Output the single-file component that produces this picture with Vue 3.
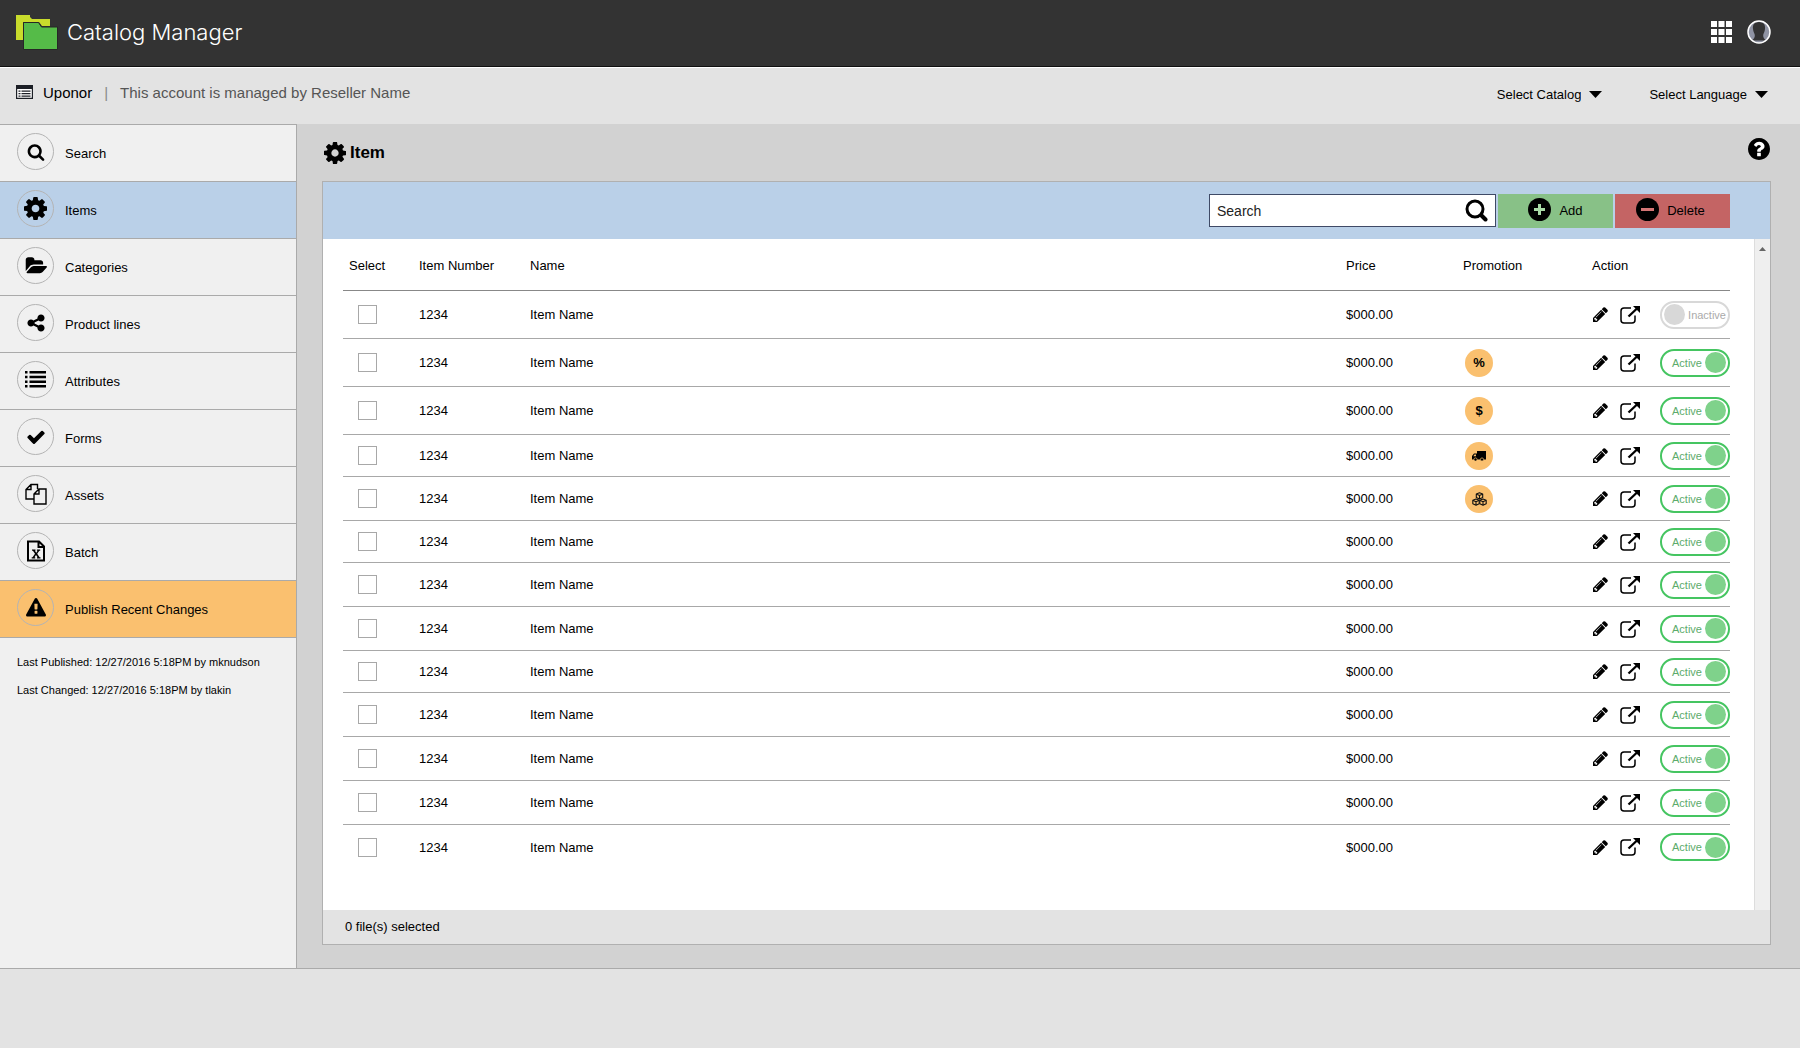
<script setup>
import { ref, computed } from 'vue'

const icons = {
  search: { box: '0 0 1792 1792', d: 'M1216 832q0-185-131.5-316.5t-316.5-131.5-316.5 131.5-131.5 316.5 131.5 316.5 316.5 131.5 316.5-131.5 131.5-316.5zm512 832q0 52-38 90t-90 38q-54 0-90-38l-343-342q-179 124-399 124-143 0-273.5-55.5t-225-150-150-225-55.5-273.5 55.5-273.5 150-225 225-150 273.5-55.5 273.5 55.5 225 150 150 225 55.5 273.5q0 220-124 399l343 343q37 37 37 90z' },
  gear: { box: '128 128 1536 1536', d: 'M1152 896q0-106-75-181t-181-75-181 75-75 181 75 181 181 75 181-75 75-181zm512-109v222q0 12-8 23t-20 13l-185 28q-19 54-39 91 35 50 107 138 10 12 10 25t-9 23q-27 37-99 108t-94 71q-12 0-26-9l-138-108q-44 23-91 38-16 136-29 186-7 28-36 28h-222q-14 0-24.5-8.5t-11.5-21.5l-28-184q-49-16-90-37l-141 107q-10 9-25 9-14 0-25-11-126-114-165-168-7-10-7-23 0-12 8-23 15-21 51-66.5t54-70.5q-27-50-41-99l-183-27q-13-2-21-12.5t-8-23.5v-222q0-12 8-23t19-13l186-28q14-46 39-92-40-57-107-138-10-12-10-24 0-10 9-23 26-36 98.5-107.5t94.5-71.5q13 0 26 10l138 107q44-23 91-38 16-136 29-186 7-28 36-28h222q14 0 24.5 8.5t11.5 21.5l28 184q49 16 90 37l142-107q9-9 24-9 13 0 25 10 129 119 165 170 7 8 7 22 0 12-8 23-15 21-51 66.5t-54 70.5q26 50 41 98l183 28q13 2 21 12.5t8 23.5z' },
  folder: { box: '0 0 1943 1792', d: 'M1943 952q0 31-31 66l-336 396q-43 51-120.5 86.5t-143.5 35.5h-1088q-34 0-60.5-13t-26.5-43q0-31 31-66l336-396q43-51 120.5-86.5t143.5-35.5h1088q34 0 60.5 13t26.500 43zm-343-344v160h-832q-94 0-197 47.500t-164 119.500l-337 396-5 6q0-4-.5-12.500t-.5-12.500v-960q0-92 66-158t158-66h320q92 0 158 66t66 158v32h544q92 0 158 66t66 158z' },
  share: { box: '0 0 1792 1792', d: 'M1344 1024q133 0 226.5 93.5t93.5 226.5-93.5 226.5-226.5 93.5-226.5-93.5-93.5-226.5q0-12 2-34l-360-180q-92 86-218 86-133 0-226.5-93.5t-93.5-226.5 93.5-226.5 226.500-93.500q126 0 218 86l360-180q-2-22-2-34 0-133 93.5-226.5t226.500-93.500 226.500 93.500 93.500 226.500-93.500 226.500-226.500 93.500q-126 0-218-86l-360 180q2 22 2 34t-2 34l360 180q92-86 218-86z' },
  list: { box: '0 0 21 21', d: 'M0 2h2.500v2.500H0zM4.500 2H21v2.500H4.500zM0 6.700h2.500v2.500H0zM4.500 6.700H21v2.500H4.500zM0 11.400h2.500v2.500H0zM4.500 11.400H21v2.500H4.500zM0 16.100h2.500v2.500H0zM4.500 16.100H21v2.500H4.500z' },
  check: { box: '0 0 1792 1792', d: 'M1671 566q0 40-28 68l-724 724-136 136q-28 28-68 28t-68-28l-136-136-362-362q-28-28-28-68t28-68l136-136q28-28 68-28t68 28l294 295 656-657q28-28 68-28t68 28l136 136q28 28 28 68z' },
  copy: { box: '0 0 22 22', line: 1.4, d: 'M9 16H1V6.500L6 1.500h6.500V6M6 1.500v5H1M9 11l5-5h7v15H9zM14 6v5H9' },
  excel: { box: '0 0 20 22', line: 2, d: 'M2 1.500h11L18 6.500V20.500H2zM12.500 1.500V7H18', extra: 'M6 9.500h3.500v1.300h-.6l1.400 2 1.300-2h-.7V9.500h3.300v1.300h-.9l-2.100 3 2.400 3.500h.9v1.300H11v-1.300h.7l-1.700-2.400-1.500 2.400h.7v1.300H5.700v-1.300h.9l2.400-3.500-2.100-3H6z' },
  warning: { box: '0 0 1792 1792', d: 'M1024 1375v-190q0-14-9.500-23.500t-22.500-9.500h-192q-13 0-22.500 9.500t-9.500 23.500v190q0 14 9.500 23.500t22.500 9.500h192q13 0 22.500-9.500t9.500-23.500zm-2-374l18-459q0-12-10-19-13-11-24-11h-220q-11 0-24 11-10 7-10 21l17 457q0 10 10 16.500t24 6.500h185q14 0 23.500-6.500t10.500-16.500zm-14-934l768 1408q35 63-2 126-17 29-46.500 46t-63.500 17h-1536q-34 0-63.500-17t-46.500-46q-37-63-2-126l768-1408q17-31 47-49t65-18 65 18 47 49z' },
  help: { box: '128 128 1536 1536', d: 'M1024 1376v-192q0-14-9-23t-23-9h-192q-14 0-23 9t-9 23v192q0 14 9 23t23 9h192q14 0 23-9t9-23zm256-672q0-88-55.5-163t-138.5-116-170-41q-243 0-371 213-15 24 8 42l132 100q7 6 19 6 16 0 25-12 53-68 86-92 34-24 86-24 48 0 85.5 26t37.5 59q0 38-20 61t-68 45q-63 28-115.500 86.500t-52.500 125.500v36q0 14 9 23t23 9h192q14 0 23-9t9-23q0-19 21.500-49.500t54.500-49.500q32-18 49-28.500t46-35 44.500-48 28-60.500 12.500-81zm384 192q0 209-103 385.500t-279.500 279.500-385.500 103-385.500-103-279.500-279.500-103-385.500 103-385.500 279.500-279.500 385.500-103 385.500 103 279.500 279.500 103 385.500z' }
}

const nav = [
  { label: 'Search', icon: 'search', size: 18 },
  { label: 'Items', icon: 'gear', size: 23, state: 'current' },
  { label: 'Categories', icon: 'folder', size: 22 },
  { label: 'Product lines', icon: 'share', size: 20 },
  { label: 'Attributes', icon: 'list', size: 21 },
  { label: 'Forms', icon: 'check', size: 20 },
  { label: 'Assets', icon: 'copy', size: 22 },
  { label: 'Batch', icon: 'excel', size: 22 },
  { label: 'Publish Recent Changes', icon: 'warning', size: 20, state: 'alert' }
]

const promos = ['', 'percent', 'dollar', 'truck', 'cubes']
const sizes = ['tall', 'tall', 'tall', 'short', '', 'short', '', '', 'short', '', '', '', '']

const items = ref(
  sizes.map((size, i) => ({
    id: i,
    size,
    number: '1234',
    name: 'Item Name',
    price: '$000.00',
    promo: promos[i] || '',
    active: i > 0,
    selected: false
  }))
)

const selectedCount = computed(() => items.value.filter((item) => item.selected).length)
</script>

<template>
  <div class="page">
    <header class="topbar">
      <a class="brand" href="#">
        <svg class="brand-mark" viewBox="0 0 42 35" aria-hidden="true">
          <path fill="#c9dc2c" d="M0 0h14v2l2 2h18v7h-8l-3-4H7v18H0z" />
          <path fill="#55bb48" stroke="#262626" d="M7.500 7.500h15l3 4.500h16v22.500h-34z" />
        </svg>
        <span class="brand-name">Catalog Manager</span>
      </a>
      <div class="top-actions">
        <button type="button" class="plain" aria-label="Applications">
          <svg width="21" height="22" viewBox="0 0 21 22" fill="#fff">
            <path d="M0 0h6v6H0zM7.500 0h6v6h-6zM15 0h6v6h-6zM0 8h6v6H0zM7.500 8h6v6h-6zM15 8h6v6h-6zM0 16h6v6H0zM7.500 16h6v6h-6zM15 16h6v6h-6z" />
          </svg>
        </button>
        <button type="button" class="plain" aria-label="Account">
          <svg width="24" height="24" viewBox="0 0 24 24">
            <circle cx="12" cy="12" r="11" fill="#8f93a3" />
            <path fill="#333" d="M12 2c-5 0-6.500 3-6 7 .3 3 1.500 4 1.800 6 .2 2-.8 4-3 5.500h14.400c-2.200-1.500-3.200-3.500-3-5.500.3-2 1.500-3 1.800-6 .5-4-1-7-6-7z" />
            <circle cx="12" cy="12" r="11" fill="none" stroke="#fff" stroke-width="1.500" />
          </svg>
        </button>
      </div>
    </header>

    <div class="account">
      <div class="account-info">
        <svg width="17" height="14" viewBox="0 0 17 14" aria-hidden="true">
          <path fill="#fff" d="M0 0h17v14H0z" />
          <path fill="none" stroke="#1c1f26" stroke-width="1.200" d="M.6.6h15.800v12.800H.6z" />
          <path fill="#1c1f26" d="M0 0h17v4H0zM2.500 5.500h2v1.200h-2zM5.500 5.500h9v1.200h-9zM2.500 8h2v1.200h-2zM5.500 8h9v1.200h-9zM2.500 10.500h2v1.200h-2zM5.500 10.500h9v1.200h-9z" />
        </svg>
        <strong>Uponor</strong>
        <span class="divider">|</span>
        <span class="managed">This account is managed by Reseller Name</span>
      </div>
      <div class="pickers">
        <span class="picker">
          <select aria-label="Select Catalog"><option>Select Catalog</option></select>
          <svg width="13" height="7" viewBox="0 0 13 7" aria-hidden="true"><path d="M0 0h13L6.500 7z" /></svg>
        </span>
        <span class="picker">
          <select aria-label="Select Language"><option>Select Language</option></select>
          <svg width="13" height="7" viewBox="0 0 13 7" aria-hidden="true"><path d="M0 0h13L6.500 7z" /></svg>
        </span>
      </div>
    </div>

    <div class="body">
      <aside class="sidebar">
        <nav>
          <a v-for="entry in nav" :key="entry.label" href="#" class="nav-item" :class="entry.state">
            <span class="nav-icon">
              <svg :width="entry.size" :height="entry.size" :viewBox="icons[entry.icon].box" aria-hidden="true">
                <path
                  v-if="icons[entry.icon].line"
                  :d="icons[entry.icon].d"
                  fill="none"
                  stroke="currentColor"
                  :stroke-width="icons[entry.icon].line"
                />
                <path v-else :d="icons[entry.icon].d" />
                <path v-if="icons[entry.icon].extra" :d="icons[entry.icon].extra" />
              </svg>
            </span>
            <span>{{ entry.label }}</span>
          </a>
        </nav>
        <div class="history">
          <p>Last Published: 12/27/2016 5:18PM by mknudson</p>
          <p>Last Changed: 12/27/2016 5:18PM by tlakin</p>
        </div>
      </aside>

      <main class="content">
        <div class="heading">
          <h1>
            <svg width="22" height="22" :viewBox="icons.gear.box" aria-hidden="true"><path :d="icons.gear.d" /></svg>
            <span>Item</span>
          </h1>
          <button type="button" class="plain help" aria-label="Help">
            <svg width="22" height="22" :viewBox="icons.help.box"><circle cx="896" cy="896" r="600" fill="#fff" /><path :d="icons.help.d" /></svg>
          </button>
        </div>

        <section class="panel">
          <div class="toolbar">
            <form class="search" @submit.prevent>
              <input type="text" placeholder="Search" aria-label="Search" />
              <button type="submit" class="plain" aria-label="Run search">
                <svg width="23" height="23" viewBox="0 0 23 23" fill="none" stroke="#000">
                  <circle cx="10" cy="10" r="8" stroke-width="3" />
                  <path stroke-width="4" stroke-linecap="round" d="M16.500 16.500l4 4" />
                </svg>
              </button>
            </form>
            <button type="button" class="command add">
              <svg width="23" height="23" viewBox="0 0 23 23" aria-hidden="true">
                <circle cx="11.500" cy="11.500" r="11.500" />
                <path fill="#a9dba6" d="M10 6h3v4h4v3h-4v4h-3v-4H6v-3h4z" />
              </svg>
              <span>Add</span>
            </button>
            <button type="button" class="command delete">
              <svg width="23" height="23" viewBox="0 0 23 23" aria-hidden="true">
                <circle cx="11.500" cy="11.500" r="11.500" />
                <path fill="#d47575" d="M5 10h13v3H5z" />
              </svg>
              <span>Delete</span>
            </button>
          </div>

          <div class="list">
            <div class="list-inner">
              <table>
                <colgroup>
                  <col class="c-select" /><col class="c-number" /><col />
                  <col class="c-price" /><col class="c-promo" /><col class="c-action" />
                </colgroup>
                <thead>
                  <tr>
                    <th class="first">Select</th>
                    <th>Item Number</th>
                    <th>Name</th>
                    <th>Price</th>
                    <th>Promotion</th>
                    <th>Action</th>
                  </tr>
                </thead>
                <tbody>
                  <tr v-for="item in items" :key="item.id" :class="item.size">
                    <td class="pick">
                      <input v-model="item.selected" type="checkbox" :aria-label="'Select ' + item.name" />
                    </td>
                    <td>{{ item.number }}</td>
                    <td>{{ item.name }}</td>
                    <td>{{ item.price }}</td>
                    <td>
                      <span v-if="item.promo" class="badge">
                        <template v-if="item.promo === 'percent'">%</template>
                        <template v-else-if="item.promo === 'dollar'">$</template>
                        <svg v-else-if="item.promo === 'truck'" width="14" height="12" viewBox="0 0 14 12" role="img" aria-label="Shipping">
                          <path d="M5 1h9v8.500H5zM2 3.500h3v6H0V6zM2.500 4.500L1.300 6.300H4V4.500z" fill-rule="evenodd" />
                          <circle cx="3.500" cy="9.500" r="1.600" stroke="#fac06f" stroke-width=".7" />
                          <circle cx="10" cy="9.500" r="1.600" stroke="#fac06f" stroke-width=".7" />
                        </svg>
                        <svg v-else width="15" height="14" viewBox="0 0 15 14" role="img" aria-label="Bundle">
                          <g fill="#fac06f" stroke="#111" stroke-width="1.100" stroke-linejoin="round">
                            <path d="M7.500.8L10.700 2v3.500L7.500 7 4.300 5.500V2zM4.300 2l3.200 1.400L10.700 2M7.500 3.400V7" />
                            <path d="M4 7l3.200 1.300v3.400L4 13.200.8 11.700V8.300zM.8 8.300L4 9.700l3.200-1.400M4 9.700v3.500" />
                            <path d="M11 7l3.200 1.300v3.400L11 13.200l-3.200-1.500V8.300zM7.800 8.300L11 9.700l3.200-1.400M11 9.700v3.500" />
                          </g>
                        </svg>
                      </span>
                    </td>
                    <td>
                      <div class="actions">
                        <button type="button" class="plain" aria-label="Edit">
                          <svg width="15" height="15" viewBox="128 128 1536 1536">
                            <path d="M491 1536l91-91-235-235-91 91v107h128v128h107zm523-928q0-22-22-22-10 0-17 7l-542 542q-7 7-7 17 0 22 22 22 10 0 17-7l542-542q7-7 7-17zm-54-192l416 416-832 832h-416v-416zm683 96q0 53-37 90l-166 166-416-416 166-165q36-38 90-38 53 0 91 38l235 234q37 39 37 91z" />
                          </svg>
                        </button>
                        <button type="button" class="plain open" aria-label="Open">
                          <svg width="20" height="18" viewBox="0 0 20 18">
                            <path fill="none" stroke="#000" stroke-width="1.500" d="M11 2H4Q1 2 1 5v9q0 3 3 3h8q3 0 3-3V9.500" />
                            <path fill="none" stroke="#000" stroke-width="2.400" d="M8.500 10.500L17 2.500" />
                            <path d="M13 0h7v7z" />
                          </svg>
                        </button>
                        <label class="toggle" :class="{ on: item.active }">
                          <input v-model="item.active" type="checkbox" role="switch" />
                          <span>{{ item.active ? 'Active' : 'Inactive' }}</span>
                          <i class="knob"></i>
                        </label>
                      </div>
                    </td>
                  </tr>
                </tbody>
              </table>
            </div>
            <div class="scrollbar" aria-hidden="true">
              <svg width="7" height="4" viewBox="0 0 7 4"><path fill="#666" d="M3.500 0L7 4H0z" /></svg>
            </div>
          </div>

          <div class="status">{{ selectedCount }} file(s) selected</div>
        </section>
      </main>
    </div>

    <footer class="bottom"></footer>
  </div>
</template>

<style>
body {
  margin: 0;
  background: #e3e3e3;
}
</style>

<style scoped>
.page {
  display: flex;
  flex-direction: column;
  min-height: 100vh;
  font-family: "Liberation Sans", Arial, sans-serif;
  font-size: 13px;
  color: #000;
}
.page * {
  box-sizing: border-box;
}
svg {
  display: block;
  flex: none;
}
.plain {
  padding: 0;
  border: 0;
  background: none;
  cursor: pointer;
}

/* Top bar */
.topbar {
  display: flex;
  align-items: center;
  justify-content: space-between;
  height: 67px;
  padding: 0 29px 2px 16px;
  background: #333;
  border-bottom: 1px solid #111;
}
.brand {
  display: flex;
  align-items: center;
  gap: 9px;
  color: #fff;
  text-decoration: none;
}
.brand-mark {
  width: 42px;
  height: 35px;
}
.brand-name {
  font-family: Inter, "Liberation Sans", sans-serif;
  font-size: 22px;
  font-weight: 300;
}
.top-actions {
  display: flex;
  align-items: center;
  gap: 15px;
}

/* Account bar */
.account {
  display: flex;
  align-items: center;
  justify-content: space-between;
  height: 57px;
  padding: 0 32px 0 16px;
  background: #e3e3e3;
  border-top: 1px solid #fff;
}
.account-info {
  display: flex;
  align-items: center;
  gap: 10px;
  padding-bottom: 8px;
  font-size: 15px;
}
.account-info strong {
  font-weight: 400;
}
.divider {
  margin: 0 2px;
  color: #888;
}
.managed {
  color: #555;
}
.pickers {
  display: flex;
  gap: 47px;
  padding-bottom: 4px;
}
.picker {
  display: flex;
  align-items: center;
  gap: 8px;
}
.picker select {
  appearance: none;
  field-sizing: content;
  padding: 0;
  border: 0;
  background: none;
  font: inherit;
  color: inherit;
}

/* Body */
.body {
  display: flex;
  border-bottom: 1px solid #aaa;
}
.sidebar {
  flex: none;
  width: 297px;
  background: #f0f0f0;
  border-right: 1px solid #aaa;
}
nav {
  border-top: 1px solid #aaa;
}
.nav-item {
  display: flex;
  align-items: center;
  gap: 11px;
  height: 57px;
  padding-left: 17px;
  border-bottom: 1px solid #aaa;
  color: #000;
  text-decoration: none;
}
.nav-item.current {
  background: #bad0e8;
}
.nav-item.alert {
  background: #fac06f;
}
.nav-icon {
  display: flex;
  align-items: center;
  justify-content: center;
  width: 37px;
  height: 37px;
  margin-bottom: 3px;
  border: 1px solid #b4b4b4;
  border-radius: 50%;
}
.history {
  padding: 10px 17px;
  font-size: 11px;
  line-height: 28px;
}
.history p {
  margin: 0;
}

/* Content */
.content {
  flex: 1;
  min-width: 0;
  padding: 0 29px 23px 25px;
  background: #d2d2d2;
}
.heading {
  display: flex;
  align-items: center;
  justify-content: space-between;
  height: 57px;
}
.heading h1 {
  display: flex;
  align-items: center;
  gap: 4px;
  margin: 0;
  padding-left: 2px;
  font-size: 17px;
}
.help {
  padding: 0 1px 8px 0;
}
.panel {
  background: #fff;
  border: 1px solid #b0b0b0;
}
.toolbar {
  display: flex;
  align-items: center;
  justify-content: flex-end;
  gap: 2px;
  height: 57px;
  padding-right: 40px;
  background: #bad0e8;
}
.search {
  display: flex;
  align-items: center;
  width: 287px;
  height: 33px;
  padding: 0 7px;
  background: #fff;
  border: 1px solid #3f4a66;
}
.search input {
  flex: 1;
  min-width: 0;
  padding: 0;
  border: 0;
  outline: 0;
  background: none;
  font: inherit;
  font-size: 14px;
}
.search input::placeholder {
  color: #222;
  opacity: 1;
}
.command {
  display: flex;
  align-items: center;
  justify-content: center;
  gap: 8px;
  width: 115px;
  height: 34px;
  padding: 0;
  border: 0;
  font: inherit;
  color: #000;
  cursor: pointer;
}
.command svg {
  margin-bottom: 2px;
}
.add {
  background: #88c187;
}
.delete {
  padding-right: 4px;
  background: #c46464;
}

/* Table */
.list {
  display: flex;
}
.list-inner {
  flex: 1;
  min-width: 0;
  padding: 0 24px 41px 20px;
}
table {
  width: 100%;
  table-layout: fixed;
  border-collapse: separate;
  border-spacing: 0;
}
.c-select {
  width: 76px;
}
.c-number {
  width: 111px;
}
.c-price {
  width: 117px;
}
.c-promo {
  width: 129px;
}
.c-action {
  width: 138px;
}
th {
  height: 52px;
  padding: 2px 0 0;
  border-bottom: 1px solid #888;
  font-weight: 400;
  text-align: left;
}
th.first {
  padding-left: 6px;
}
td {
  height: 44px;
  padding: 0;
  border-bottom: 1px solid #a8a8a8;
}
.tall td {
  height: 48px;
}
.short td {
  height: 42px;
}
tbody tr:last-child td {
  border-bottom: 0;
}
.pick input {
  display: block;
  appearance: none;
  width: 19px;
  height: 19px;
  margin: 0 0 0 15px;
  border: 1px solid #a8a8a8;
  background: #fff;
}
.pick input:checked {
  background: #bad0e8;
}
.badge {
  display: flex;
  align-items: center;
  justify-content: center;
  width: 28px;
  height: 28px;
  margin-left: 2px;
  border-radius: 50%;
  background: #fac06f;
  font-weight: 700;
}
.actions {
  display: flex;
  align-items: center;
  justify-content: space-between;
  padding-left: 1px;
}
.open {
  margin-right: 8px;
}
.toggle {
  display: flex;
  align-items: center;
  justify-content: space-between;
  flex-direction: row-reverse;
  width: 70px;
  height: 28px;
  padding: 0 2px;
  border: 2px solid #d8d8d8;
  border-radius: 14px;
  background: #fff;
  font-size: 11px;
  color: #aaa;
  cursor: pointer;
}
.toggle.on {
  flex-direction: row;
  padding: 0 2px 0 10px;
  border-color: #45c561;
  color: #5cab6b;
}
.toggle input {
  appearance: none;
  position: absolute;
  margin: 0;
}
.knob {
  width: 21px;
  height: 21px;
  border-radius: 50%;
  background: #d8d8d8;
}
.on .knob {
  background: #7fd28b;
}
.scrollbar {
  display: flex;
  justify-content: center;
  width: 16px;
  padding-top: 8px;
  border-left: 1px solid #ddd;
  background: #efefef;
}
.status {
  height: 34px;
  padding-left: 22px;
  background: #e3e3e3;
  line-height: 34px;
}
.bottom {
  flex: 1;
  background: #e3e3e3;
}
</style>
